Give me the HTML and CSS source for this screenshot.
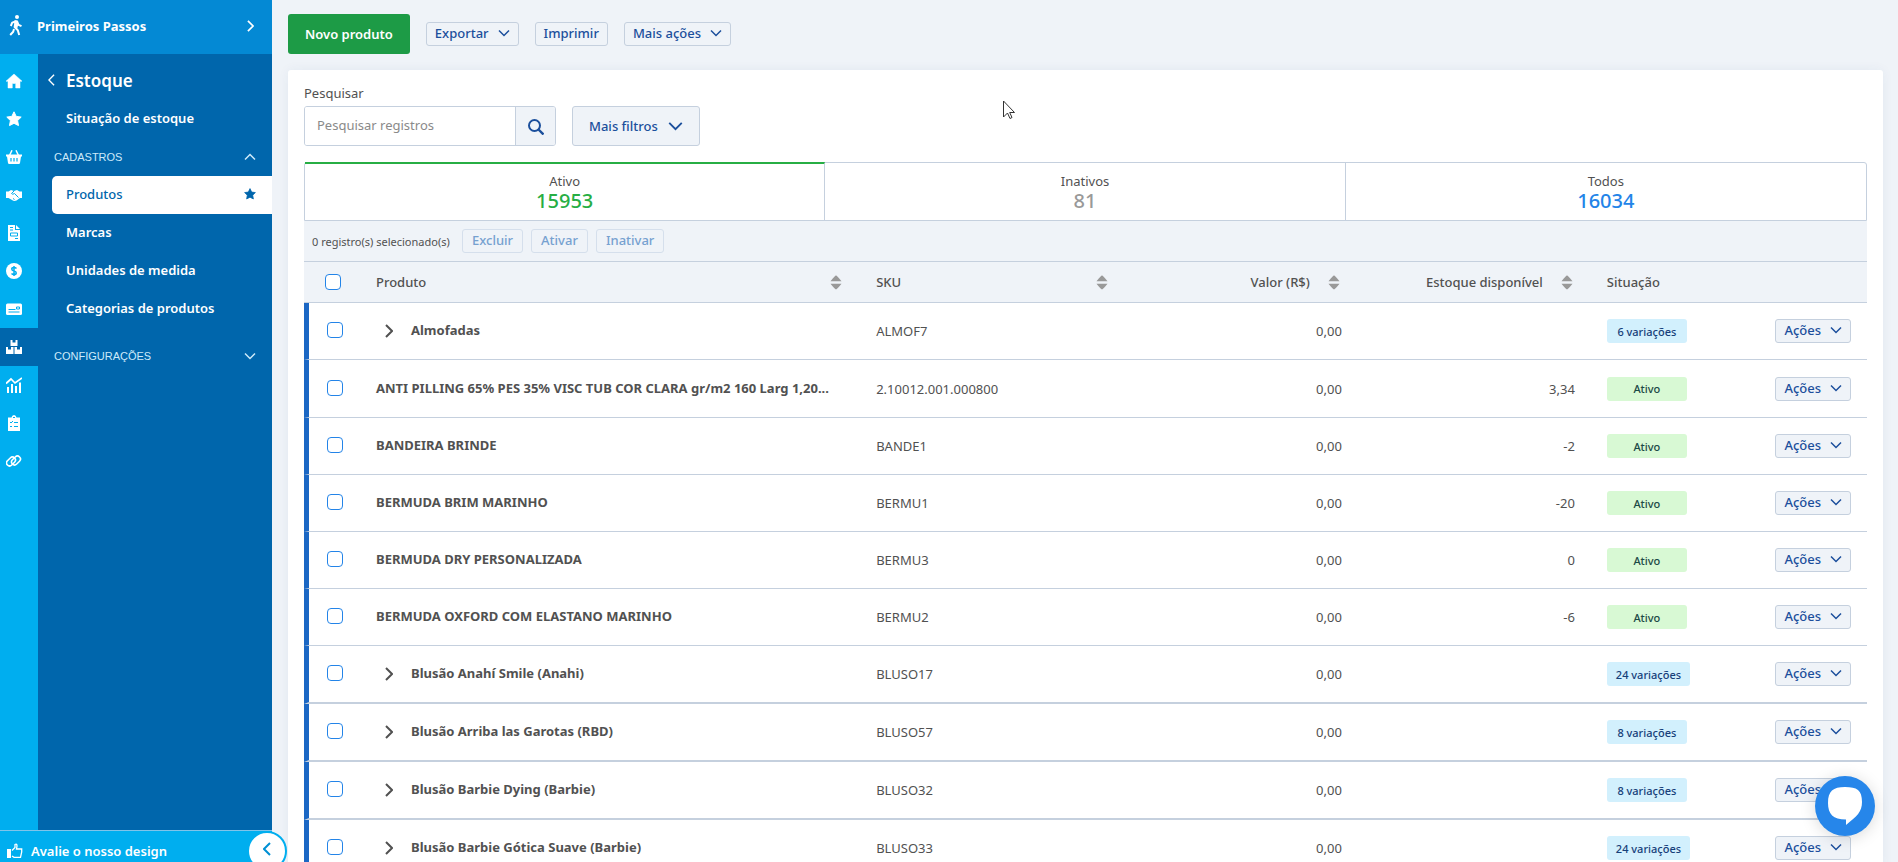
FILE: index.html
```
<!DOCTYPE html>
<html lang="pt-BR">
<head>
    <meta charset="UTF-8">
    <meta name="viewport" content="width=device-width, initial-scale=1.0">
    <title>Produtos</title>
    <link rel="stylesheet" href="styles.css">
</head>
<body>
    <!-- Shared icons -->
    <svg class="sprite" aria-hidden="true">
        <symbol id="down" viewBox="0 0 12 8"><path d="M1 1.500l5 5 5-5" fill="none" stroke="currentColor" stroke-width="1.500"/></symbol>
        <symbol id="right" viewBox="0 0 8 14"><path d="M1 1l6 6-6 6" fill="none" stroke="currentColor" stroke-width="2"/></symbol>
        <symbol id="sort" viewBox="0 0 12 15"><path d="M6 0.500Q7 0.500 11.500 6.200H.5Q5 .5 6 .5zM.5 8.800h11Q7 14.500 6 14.500T.5 8.800z" fill="#999"/></symbol>
        <symbol id="star" viewBox="0 0 16 16"><path d="M8 .8l2.200 4.600 5 .7-3.600 3.500.9 5L8 12.300l-4.500 2.300.9-5L.8 6.100l5-.7z" fill="currentColor" stroke="currentColor" stroke-linejoin="round"/></symbol>
    </svg>

    <div class="app">
        <aside class="sidebar">
            <a class="first-steps" href="#">
                <svg class="walk" viewBox="0 0 14 21"><circle cx="8" cy="2" r="2" fill="#fff"/><path d="M7 6.200L3.200 7.600 1.800 11M8 6.200l1.500 3.600 3 1.400M6.800 6.500L5.600 12l3.200 3.200 1.400 4.800M5 14l-.8 2.800L1.200 20" fill="none" stroke="#fff" stroke-width="2" stroke-linejoin="round"/><path d="M5.500 5.200h3l.8 4-1 4-3-1z" fill="#fff"/></svg>
                <span>Primeiros Passos</span>
                <svg class="go" viewBox="0 0 8 14"><use href="#right"/></svg>
            </a>

            <div class="sidebar-body">
                <nav class="rail">
                    <a href="#" aria-label="Início"><svg viewBox="0 0 16 16"><path d="M8 1L0 8.200h2V15h4.300v-4.500h3.400V15H14V8.200h2z" fill="#fff" stroke="#fff" stroke-width=".5" stroke-linejoin="round"/></svg></a>
                    <a href="#" aria-label="Favoritos"><svg viewBox="0 0 16 16"><use href="#star"/></svg></a>
                    <a href="#" aria-label="Vendas"><svg viewBox="0 0 16 16"><path d="M3.500 6.500L6 1.200M12.500 6.500L10 1.200" stroke="#fff" stroke-width="1.500"/><path d="M0 5.500h16v2h-1l-1 6.500q-.2 1-1.200 1H3.200q-1 0-1.200-1L1 7.500H0z" fill="#fff"/><path d="M5 9v3.500M8 9v3.500M11 9v3.500" stroke="#00aeef" stroke-width="1.200"/></svg></a>
                    <a href="#" aria-label="Parceiros"><svg viewBox="0 0 16 16"><path d="M0 4.500h2.500L5 3l3 1 3-1 2.500 1.500H16V11h-2l-3.500 2.500Q8 14.500 6 13L2.500 11H0z" fill="#fff"/><path d="M8 4L5.500 6.500q1 1.500 3 0l4 4M7 11.500l1.500 1" fill="none" stroke="#00aeef" stroke-width="1"/></svg></a>
                    <a href="#" aria-label="Notas"><svg viewBox="0 0 16 16"><path d="M2 0h7v5h5v11H2z" fill="#fff"/><path d="M10 0l4 4h-4z" fill="#fff"/><path d="M4 2.500h3M4 5h3M4.500 8h7v3h-7zM9 13.500h3" fill="none" stroke="#00aeef"/></svg></a>
                    <a href="#" aria-label="Finanças"><svg viewBox="0 0 16 16"><circle cx="8" cy="8" r="8" fill="#fff"/><path d="M10.500 5.500Q9.500 4.500 8 4.500c-3 0-3 3 0 3.500s3 3.500 0 3.500q-1.500 0-2.500-1M8 3v10" fill="none" stroke="#00aeef" stroke-width="1.500"/></svg></a>
                    <a href="#" aria-label="Contas"><svg viewBox="0 0 16 16"><rect y="2.500" width="16" height="11.500" rx="1.500" fill="#fff"/><path d="M2.500 8.500h7M2.500 11h11M10.500 6h3v2h-3z" fill="none" stroke="#00aeef"/></svg></a>
                    <a href="#" class="active" aria-label="Estoque"><svg viewBox="0 0 16 16"><path d="M4.500 1h2v2.500h3V1h2v6h-7zM0 8h2v2.500h3V8h2.500v7H0zM8.500 8H11v2.500h3V8h2v7H8.500z" fill="#fff"/></svg></a>
                    <a href="#" aria-label="Relatórios"><svg viewBox="0 0 16 16"><path d="M0 6.500L5 2l4 4 7-5" fill="none" stroke="#fff" stroke-width="1.700"/><path d="M2 16v-6M6 16V7M10 16V9M14 16V5.500" stroke="#fff" stroke-width="2"/></svg></a>
                    <a href="#" aria-label="Tarefas"><svg viewBox="0 0 16 16"><path d="M2 2.500h3.500Q6 0 8 0t2.500 2.500H14V16H2z" fill="#fff"/><path d="M4 7l1 1 2-2M8 7.500h4M4 11.500h2M8 11.500h4M7 2.500h2" fill="none" stroke="#00aeef"/></svg></a>
                    <a href="#" aria-label="Integrações"><svg viewBox="0 0 16 16"><g fill="none" stroke="#fff" stroke-width="1.600"><rect x="0" y="5.500" width="10" height="6" rx="3" transform="rotate(-45 5 8.500)"/><rect x="5" y="4.500" width="10" height="6" rx="3" transform="rotate(-45 10 7.500)"/></g></svg></a>
                </nav>

                <nav class="menu">
                    <a class="menu-title" href="#"><svg viewBox="0 0 8 14"><path d="M7 1L1 7l6 6" fill="none" stroke="#fff" stroke-width="1.600"/></svg>Estoque</a>
                    <a class="menu-item" href="#">Situação de estoque</a>
                    <button class="menu-group"><span>CADASTROS</span><svg class="flip" viewBox="0 0 12 8"><use href="#down"/></svg></button>
                    <a class="menu-item selected" href="#"><span>Produtos</span><svg viewBox="0 0 16 16"><use href="#star"/></svg></a>
                    <a class="menu-item" href="#">Marcas</a>
                    <a class="menu-item" href="#">Unidades de medida</a>
                    <a class="menu-item" href="#">Categorias de produtos</a>
                    <button class="menu-group spaced"><span>CONFIGURAÇÕES</span><svg viewBox="0 0 12 8"><use href="#down"/></svg></button>
                </nav>
            </div>

            <div class="sidebar-footer">
                <a href="#"><svg viewBox="0 0 16 16"><path d="M0 6h4v9H0z" fill="#fff"/><path d="M5 7.500l3-3V1.500q2-1 2 1.500L9.500 6h5.200v3l-1.200 5.300H7L5 13" fill="none" stroke="#fff" stroke-width="1.300"/></svg>Avalie o nosso design</a>
                <button class="collapse" aria-label="Recolher menu"><svg viewBox="0 0 8 14"><path d="M7 1L1 7l6 6" fill="none" stroke="currentColor" stroke-width="2"/></svg></button>
            </div>
        </aside>

        <main class="main">
            <div class="toolbar">
                <button class="btn-new">Novo produto</button>
                <button class="btn">Exportar <svg viewBox="0 0 12 8"><use href="#down"/></svg></button>
                <button class="btn">Imprimir</button>
                <button class="btn">Mais ações <svg viewBox="0 0 12 8"><use href="#down"/></svg></button>
            </div>

            <section class="panel">
                <label class="search-label" for="search">Pesquisar</label>
                <div class="filters">
                    <div class="search">
                        <input type="text" id="search" placeholder="Pesquisar registros">
                        <button aria-label="Pesquisar"><svg viewBox="0 0 16 16"><circle cx="6.500" cy="6.500" r="5.500" fill="none" stroke="currentColor" stroke-width="2"/><path d="M10.500 10.500l5 5" stroke="currentColor" stroke-width="2.400"/></svg></button>
                    </div>
                    <button class="btn-filter">Mais filtros <svg viewBox="0 0 12 8"><use href="#down"/></svg></button>
                </div>

                <div class="tabs">
                    <button class="tab on"><span>Ativo</span><strong class="green">15953</strong></button>
                    <button class="tab"><span>Inativos</span><strong class="gray">81</strong></button>
                    <button class="tab"><span>Todos</span><strong class="blue">16034</strong></button>
                </div>

                <div class="batch">
                    <span>0 registro(s) selecionado(s)</span>
                    <button class="btn" disabled>Excluir</button>
                    <button class="btn" disabled>Ativar</button>
                    <button class="btn" disabled>Inativar</button>
                </div>

                <table class="products">
                    <colgroup>
                        <col class="c-check"><col class="c-name"><col class="c-sku"><col class="c-price"><col class="c-stock"><col><col class="c-actions">
                    </colgroup>
                    <thead>
                        <tr>
                            <th><input type="checkbox" aria-label="Selecionar todos"></th>
                            <th><div class="head">Produto <svg viewBox="0 0 12 15"><use href="#sort"/></svg></div></th>
                            <th><div class="head">SKU <svg viewBox="0 0 12 15"><use href="#sort"/></svg></div></th>
                            <th><div class="head end">Valor (R$) <svg viewBox="0 0 12 15"><use href="#sort"/></svg></div></th>
                            <th><div class="head end">Estoque disponível <svg viewBox="0 0 12 15"><use href="#sort"/></svg></div></th>
                            <th>Situação</th>
                            <th></th>
                        </tr>
                    </thead>
                    <tbody>
                        <tr>
                            <td><input type="checkbox" aria-label="Almofadas"></td>
                            <td class="name"><button class="expand" aria-label="Expandir"><svg viewBox="0 0 8 14"><use href="#right"/></svg></button>Almofadas</td>
                            <td>ALMOF7</td><td class="num">0,00</td><td class="num"></td>
                            <td><span class="tag var">6 variações</span></td>
                            <td class="num"><button class="btn">Ações <svg viewBox="0 0 12 8"><use href="#down"/></svg></button></td>
                        </tr>
                        <tr class="tall">
                            <td><input type="checkbox" aria-label="ANTI PILLING"></td>
                            <td class="name">ANTI PILLING 65% PES 35% VISC TUB COR CLARA gr/m2 160 Larg 1,20...</td>
                            <td>2.10012.001.000800</td><td class="num">0,00</td><td class="num">3,34</td>
                            <td><span class="tag">Ativo</span></td>
                            <td class="num"><button class="btn">Ações <svg viewBox="0 0 12 8"><use href="#down"/></svg></button></td>
                        </tr>
                        <tr>
                            <td><input type="checkbox" aria-label="BANDEIRA BRINDE"></td>
                            <td class="name">BANDEIRA BRINDE</td>
                            <td>BANDE1</td><td class="num">0,00</td><td class="num">-2</td>
                            <td><span class="tag">Ativo</span></td>
                            <td class="num"><button class="btn">Ações <svg viewBox="0 0 12 8"><use href="#down"/></svg></button></td>
                        </tr>
                        <tr>
                            <td><input type="checkbox" aria-label="BERMUDA BRIM MARINHO"></td>
                            <td class="name">BERMUDA BRIM MARINHO</td>
                            <td>BERMU1</td><td class="num">0,00</td><td class="num">-20</td>
                            <td><span class="tag">Ativo</span></td>
                            <td class="num"><button class="btn">Ações <svg viewBox="0 0 12 8"><use href="#down"/></svg></button></td>
                        </tr>
                        <tr>
                            <td><input type="checkbox" aria-label="BERMUDA DRY PERSONALIZADA"></td>
                            <td class="name">BERMUDA DRY PERSONALIZADA</td>
                            <td>BERMU3</td><td class="num">0,00</td><td class="num">0</td>
                            <td><span class="tag">Ativo</span></td>
                            <td class="num"><button class="btn">Ações <svg viewBox="0 0 12 8"><use href="#down"/></svg></button></td>
                        </tr>
                        <tr>
                            <td><input type="checkbox" aria-label="BERMUDA OXFORD COM ELASTANO MARINHO"></td>
                            <td class="name">BERMUDA OXFORD COM ELASTANO MARINHO</td>
                            <td>BERMU2</td><td class="num">0,00</td><td class="num">-6</td>
                            <td><span class="tag">Ativo</span></td>
                            <td class="num"><button class="btn">Ações <svg viewBox="0 0 12 8"><use href="#down"/></svg></button></td>
                        </tr>
                        <tr class="tall thick">
                            <td><input type="checkbox" aria-label="Blusão Anahí Smile (Anahi)"></td>
                            <td class="name"><button class="expand" aria-label="Expandir"><svg viewBox="0 0 8 14"><use href="#right"/></svg></button>Blusão Anahí Smile (Anahi)</td>
                            <td>BLUSO17</td><td class="num">0,00</td><td class="num"></td>
                            <td><span class="tag var">24 variações</span></td>
                            <td class="num"><button class="btn">Ações <svg viewBox="0 0 12 8"><use href="#down"/></svg></button></td>
                        </tr>
                        <tr class="tall thick">
                            <td><input type="checkbox" aria-label="Blusão Arriba las Garotas (RBD)"></td>
                            <td class="name"><button class="expand" aria-label="Expandir"><svg viewBox="0 0 8 14"><use href="#right"/></svg></button>Blusão Arriba las Garotas (RBD)</td>
                            <td>BLUSO57</td><td class="num">0,00</td><td class="num"></td>
                            <td><span class="tag var">8 variações</span></td>
                            <td class="num"><button class="btn">Ações <svg viewBox="0 0 12 8"><use href="#down"/></svg></button></td>
                        </tr>
                        <tr class="tall thick">
                            <td><input type="checkbox" aria-label="Blusão Barbie Dying (Barbie)"></td>
                            <td class="name"><button class="expand" aria-label="Expandir"><svg viewBox="0 0 8 14"><use href="#right"/></svg></button>Blusão Barbie Dying (Barbie)</td>
                            <td>BLUSO32</td><td class="num">0,00</td><td class="num"></td>
                            <td><span class="tag var">8 variações</span></td>
                            <td class="num"><button class="btn">Ações <svg viewBox="0 0 12 8"><use href="#down"/></svg></button></td>
                        </tr>
                        <tr class="tall thick">
                            <td><input type="checkbox" aria-label="Blusão Barbie Gótica Suave (Barbie)"></td>
                            <td class="name"><button class="expand" aria-label="Expandir"><svg viewBox="0 0 8 14"><use href="#right"/></svg></button>Blusão Barbie Gótica Suave (Barbie)</td>
                            <td>BLUSO33</td><td class="num">0,00</td><td class="num"></td>
                            <td><span class="tag var">24 variações</span></td>
                            <td class="num"><button class="btn">Ações <svg viewBox="0 0 12 8"><use href="#down"/></svg></button></td>
                        </tr>
                    </tbody>
                </table>
            </section>
        </main>
    </div>

    <button class="chat" aria-label="Chat"><svg viewBox="0 0 36 40"><path d="M18 1C30 1 35 4 35 16c0 10-5 14-16 23v-5.500C6 33.500 1 28 1 17 1 5 6 1 18 1z" fill="#fff"/></svg></button>

    <svg class="pointer" viewBox="0 0 12 20"><path d="M.5 1v16l4-4 2.500 5.500 2-1-2.300-5H11.500z" fill="#fff" stroke="#333"/></svg>
</body>
</html>
```
FILE: styles.css
```
* {
    box-sizing: border-box;
}

body {
    margin: 0;
    height: 100vh;
    overflow: hidden;
    background-color: #eff3f8;
    color: #515151;
    font-family: "Noto Sans", sans-serif;
    font-size: 13px;
}

button,
input {
    font-family: inherit;
    font-size: inherit;
}

button {
    cursor: pointer;
}

a {
    color: inherit;
    text-decoration: none;
}

.sprite {
    display: none;
}

.app {
    display: flex;
    height: 100vh;
}

/* Sidebar */
.sidebar {
    display: flex;
    flex-direction: column;
    flex: none;
    width: 272px;
    color: #fff;
    font-weight: 600;
}

.first-steps {
    display: flex;
    align-items: center;
    gap: 14px;
    height: 54px;
    padding: 0 18px 3px 9px;
    background-color: #0489d4;
    font-weight: 700;
}

.first-steps span {
    flex: 1;
}

.walk {
    width: 14px;
    height: 21px;
}

.go {
    width: 7px;
    height: 12px;
}

.sidebar-body {
    display: flex;
    flex: 1;
    min-height: 0;
}

.rail {
    width: 38px;
    padding-top: 8px;
    background-color: #00aeef;
}

.rail a {
    display: flex;
    align-items: center;
    height: 38px;
    padding-left: 6px;
}

.rail svg {
    width: 16px;
    height: 16px;
}

.rail .active {
    background-color: #0066ac;
}

.menu {
    flex: 1;
    padding-top: 8px;
    background-color: #0066ac;
}

.menu-title {
    display: flex;
    align-items: center;
    gap: 11px;
    height: 38px;
    padding: 0 0 2px 10px;
    font-size: 17px;
}

.menu-title svg {
    width: 7px;
    height: 12px;
}

.menu-item {
    display: flex;
    align-items: center;
    justify-content: space-between;
    height: 38px;
    margin-left: 14px;
    padding: 0 16px 2px 14px;
}

.menu-item.selected {
    border-radius: 5px 0 0 5px;
    background-color: #fff;
    color: #0066ac;
    font-weight: 500;
}

.menu-item svg {
    width: 12px;
    height: 12px;
}

.menu-group {
    display: flex;
    align-items: center;
    justify-content: space-between;
    width: 100%;
    height: 38px;
    padding: 0 16px;
    border: none;
    background: none;
    color: #cdeafa;
    font-family: "Liberation Sans", sans-serif;
    font-size: 11px;
}

.menu-group svg {
    width: 12px;
    height: 8px;
}

.menu-group.spaced {
    margin-top: 9px;
}

.flip {
    transform: rotate(180deg);
}

.sidebar-footer {
    position: relative;
    height: 32px;
    padding: 11px 7px 0;
    border-top: 1px solid #80c4ea;
    background-color: #00aeef;
}

.sidebar-footer a {
    display: flex;
    align-items: center;
    gap: 8px;
}

.sidebar-footer svg {
    width: 16px;
    height: 16px;
}

.collapse {
    position: absolute;
    top: 0;
    right: -15px;
    width: 40px;
    height: 40px;
    border: 2px solid #00aeef;
    border-radius: 50%;
    background-color: #fff;
    color: #0090d4;
}

.sidebar-footer .collapse svg {
    width: 8px;
    height: 14px;
}

/* Content */
.main {
    flex: 1;
    min-width: 0;
    padding: 14px 15px 0 16px;
}

.toolbar {
    display: flex;
    align-items: center;
    gap: 16px;
    height: 40px;
    margin-bottom: 16px;
}

.btn-new {
    height: 40px;
    padding: 0 17px;
    border: none;
    border-radius: 3px;
    background-color: #1d9b46;
    color: #fff;
    font-weight: 600;
}

.btn {
    display: inline-flex;
    align-items: center;
    gap: 9px;
    height: 24px;
    padding: 0 8px 2px;
    border: 1px solid #c5d0de;
    border-radius: 3px;
    background-color: #eff3f8;
    color: #1b4f9c;
    font-weight: 500;
}

.btn svg {
    width: 12px;
    height: 8px;
}

.panel {
    height: 800px;
    padding: 16px;
    border-radius: 3px;
    background-color: #fff;
    box-shadow: 0 0 12px rgba(30, 70, 120, 0.06);
}

.search-label {
    display: block;
    height: 20px;
    line-height: 14px;
}

.filters {
    display: flex;
    gap: 16px;
    margin-bottom: 16px;
}

.search {
    display: flex;
    width: 252px;
    height: 40px;
    border: 1px solid #c5d0de;
    border-radius: 3px;
    overflow: hidden;
}

.search input {
    flex: 1;
    min-width: 0;
    padding: 0 12px 2px;
    border: none;
}

.search input::placeholder {
    color: #8a8a8a;
}

.search button {
    width: 40px;
    padding: 0;
    border: none;
    border-left: 1px solid #c5d0de;
    background-color: #eff3f8;
    color: #1b4f9c;
}

.search svg {
    width: 16px;
    height: 16px;
    vertical-align: middle;
}

.btn-filter {
    display: flex;
    align-items: center;
    gap: 10px;
    height: 40px;
    padding: 0 16px;
    border: 1px solid #c5d0de;
    border-radius: 3px;
    background-color: #eff3f8;
    color: #1b4f9c;
    font-weight: 500;
}

.btn-filter svg {
    width: 15px;
    height: 10px;
    stroke-width: 2;
}

.tabs {
    display: grid;
    grid-template-columns: repeat(3, 1fr);
    height: 59px;
    border: 1px solid #c5d0de;
    border-radius: 3px 3px 0 0;
}

.tab {
    display: flex;
    flex-direction: column;
    align-items: center;
    justify-content: center;
    padding: 0;
    border: none;
    border-right: 1px solid #c5d0de;
    background: none;
    color: #515151;
}

.tab:last-child {
    border-right: none;
}

.tab.on {
    margin-top: -1px;
    border-top: 2px solid #27ae44;
}

.tab span {
    line-height: 18px;
}

.tab strong {
    font-size: 20px;
    line-height: 22px;
    font-weight: 500;
}

.green {
    color: #27ae44;
}

.gray {
    color: #999;
}

.blue {
    color: #2384e8;
}

.batch {
    display: flex;
    align-items: center;
    gap: 8px;
    height: 41px;
    padding: 0 8px;
    border-bottom: 1px solid #c5d0de;
    background-color: #eff3f8;
    font-size: 11px;
}

.batch span {
    min-width: 142px;
}

.batch .btn {
    padding: 0 9px 2px;
    border-color: #d5dfec;
    color: #76a1d0;
    font-size: 13px;
}

/* Products table */
.products {
    width: 100%;
    table-layout: fixed;
    border-spacing: 0;
}

.c-check {
    width: 56px;
}

.c-name {
    width: 32%;
}

.c-sku {
    width: 17%;
}

.c-price {
    width: 232px;
}

.c-stock {
    width: 233px;
}

.c-actions {
    width: 120px;
}

.products th,
.products td {
    padding: 0 16px;
    border-bottom: 1px solid #c5d0de;
    text-align: left;
    white-space: nowrap;
}

.products th {
    height: 41px;
    background-color: #eff3f8;
    font-weight: 500;
}

.products td {
    height: 57px;
}

.products .tall td {
    height: 58px;
}

.products .thick td {
    border-bottom-width: 2px;
}

.products th:first-child {
    padding-left: 21px;
}

.products td:first-child {
    padding-left: 18px;
    padding-bottom: 2px;
    border-left: 5px solid #1b67c4;
}

.products .num {
    text-align: right;
}

.products input {
    display: block;
    appearance: none;
    width: 16px;
    height: 16px;
    margin: 0;
    border: 1px solid #2384e8;
    border-radius: 4px;
    background-color: #fff;
}

.products .name {
    padding-bottom: 2px;
    font-weight: 700;
}

.head {
    display: flex;
    align-items: center;
    justify-content: space-between;
    padding-right: 2px;
}

.head.end {
    justify-content: flex-end;
    gap: 18px;
}

.head svg {
    width: 12px;
    height: 15px;
}

.expand {
    width: 35px;
    padding: 0;
    border: none;
    background: none;
    color: #515151;
    text-align: left;
    vertical-align: middle;
}

.expand svg {
    display: block;
    width: 8px;
    height: 14px;
    margin-left: 9px;
}

.tag {
    display: inline-flex;
    align-items: center;
    justify-content: center;
    min-width: 80px;
    height: 24px;
    padding: 0 9px;
    border-radius: 3px;
    background-color: #d8f9d4;
    color: #1c4a46;
    font-size: 11px;
    font-weight: 500;
}

.tag.var {
    background-color: #d2f0fd;
    color: #17407a;
}

/* Floating items */
.chat {
    position: fixed;
    right: 23px;
    bottom: 26px;
    width: 60px;
    height: 60px;
    padding: 0;
    border: none;
    border-radius: 50%;
    background-color: #2686ea;
    box-shadow: 0 2px 16px rgba(0, 0, 0, 0.15);
}

.chat svg {
    width: 36px;
    height: 40px;
    vertical-align: middle;
}

.pointer {
    position: absolute;
    top: 100px;
    left: 1003px;
    width: 12px;
    height: 20px;
    pointer-events: none;
}
```
